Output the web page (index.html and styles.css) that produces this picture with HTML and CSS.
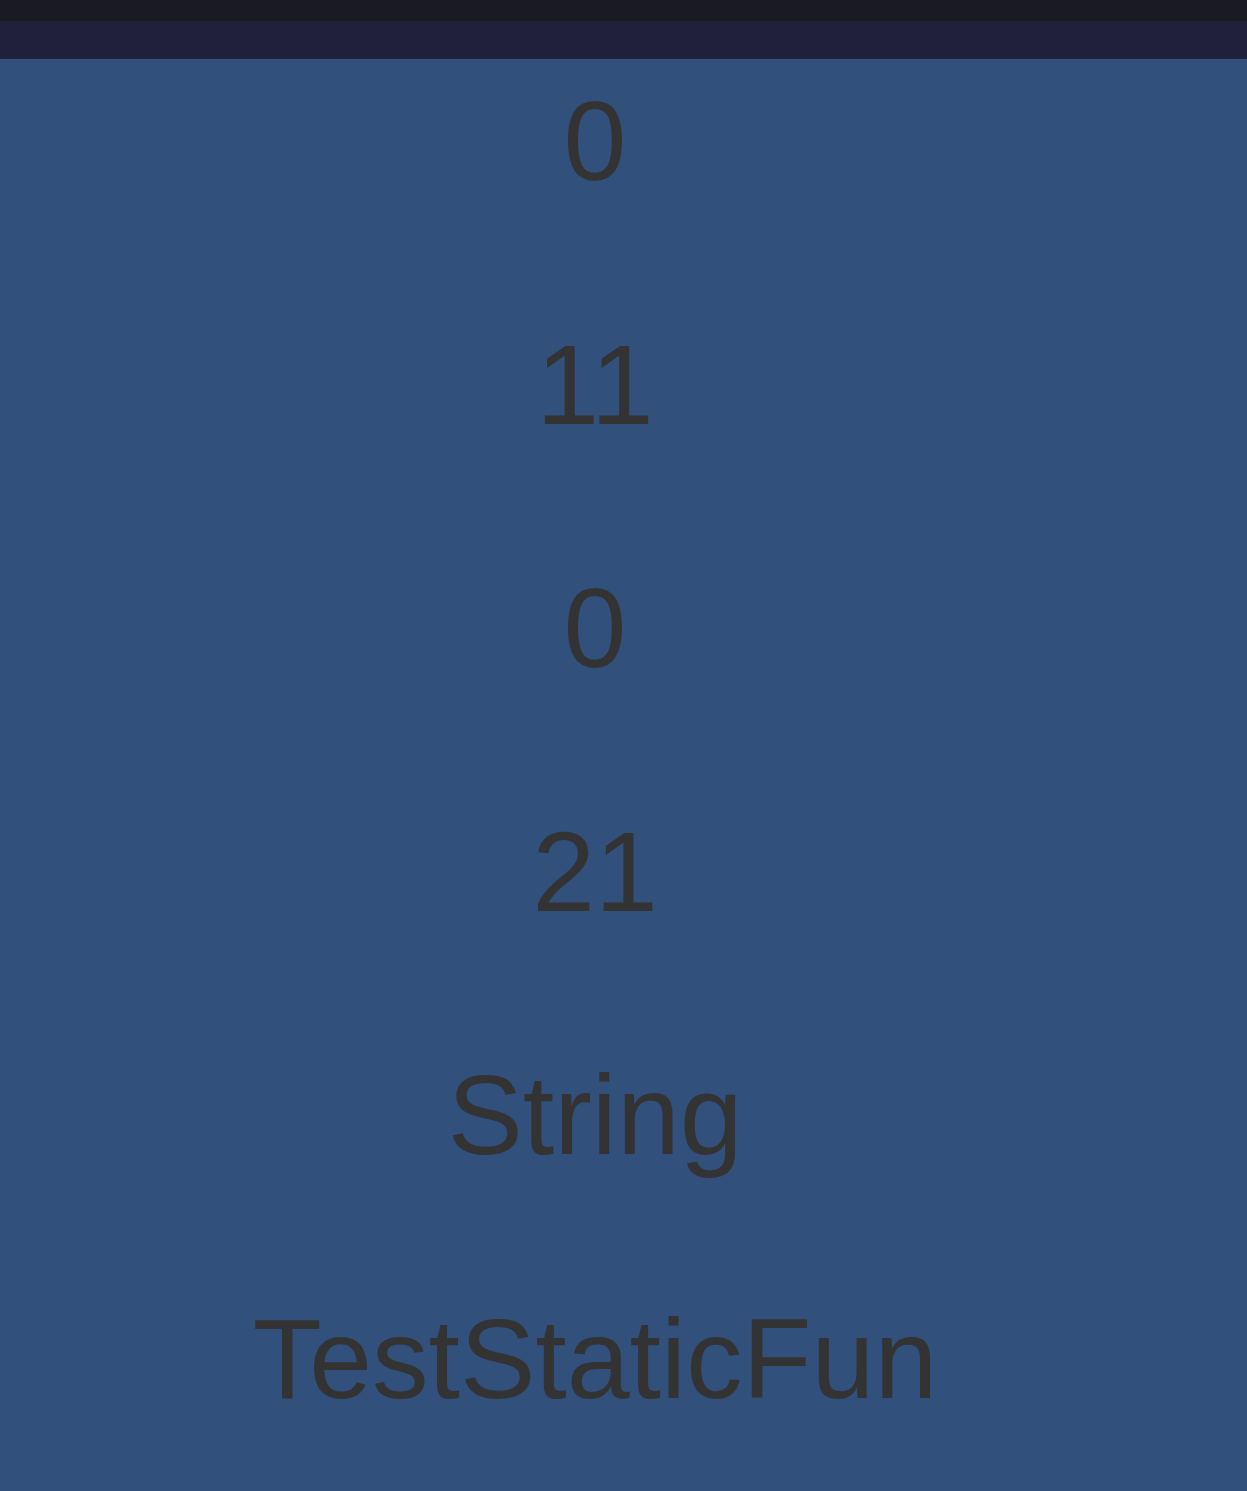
FILE: index.html
```html
<!DOCTYPE html>
<html>
<head>
<meta charset="utf-8">
<link rel="stylesheet" href="styles.css">
</head>
<body>
<div class="topbar"></div>
<div class="band"></div>
<main class="list">
  <div class="item">0</div>
  <div class="item">11</div>
  <div class="item">0</div>
  <div class="item">21</div>
  <div class="item">String</div>
  <div class="item">TestStaticFun</div>
</main>
</body>
</html>
```
FILE: styles.css
```css
html, body {
  margin: 0;
  padding: 0;
}
body {
  background: #31507b;
  font-family: "Liberation Sans", Arial, sans-serif;
  min-height: 1491px;
}
.topbar {
  height: 21px;
  background: #1a1a22;
}
.band {
  height: 38px;
  background: #20203c;
}
.list {
  display: flex;
  flex-direction: column;
  align-items: center;
  gap: 130.6px;
  padding-top: 26px;
  padding-right: 57px;
}
.item {
  font-size: 113px;
  line-height: 113px;
  color: #333333;
  text-align: center;
}
```
